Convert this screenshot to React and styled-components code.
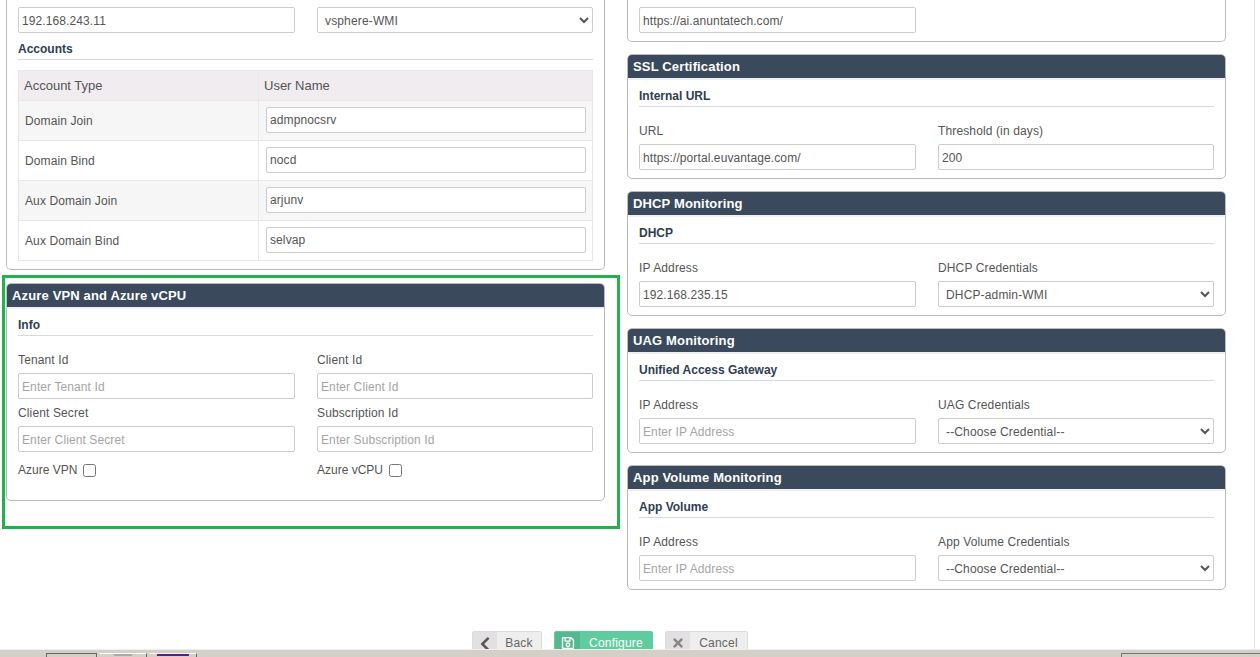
import React from "react";
import styled, { createGlobalStyle } from "styled-components";
import { FaChevronLeft, FaRegSave, FaTimes } from "react-icons/fa";

const GlobalStyle = createGlobalStyle`
  html, body {
    margin: 0;
    padding: 0;
    height: 100%;
    overflow: hidden;
    background: #fff;
    font-family: "Liberation Sans", Arial, sans-serif;
    font-size: 12px;
    color: #555;
  }
`;

const Page = styled.div`
  width: 1260px;
  height: 657px;
  display: flex;
  flex-direction: column;
  overflow: hidden;
`;

const Main = styled.div`
  flex: 1;
  min-height: 0;
  width: 1255px;
  box-sizing: border-box;
  border-right: 1px solid #e4e4e4;
  overflow: hidden;
`;

const Columns = styled.div`
  display: grid;
  grid-template-columns: 599px 599px;
  column-gap: 22px;
  padding-left: 6px;
`;

const Column = styled.div`
  display: flex;
  flex-direction: column;
  gap: ${props => props.$gap}px;
`;

const Panel = styled.section`
  position: relative;
  box-sizing: border-box;
  background: #fff;
  border: 1px solid #bbb;
  border-top: ${props => (props.$cut ? "none" : "1px solid #bbb")};
  border-radius: ${props => (props.$cut ? "0 0 5px 5px" : "5px")};
  height: ${props => props.$height}px;
`;

const PanelTitle = styled.h2`
  margin: 0;
  height: 23px;
  line-height: 23px;
  padding-left: 5px;
  background: #3a4a5c;
  border-bottom: 2px solid #f0f0f0;
  border-radius: 4px 4px 0 0;
  color: #fff;
  font-size: 13px;
  font-weight: 700;
  letter-spacing: 0.15px;
`;

const PanelBody = styled.div`
  padding: ${props => props.$top ?? 8}px 11px 0;
`;

const SectionTitle = styled.h3`
  margin: ${props => props.$before ?? 0}px 0 ${props => props.$after ?? 17}px;
  height: 18px;
  line-height: 16px;
  border-bottom: 1px solid #d3dae0;
  color: #2e3e50;
  font-size: 12px;
  font-weight: 700;
`;

const FieldGrid = styled.div`
  display: grid;
  grid-template-columns: 277px 276px;
  column-gap: 22px;
  row-gap: ${props => props.$rowGap ?? 0}px;
`;

const Field = styled.div`
  display: flex;
  flex-direction: column;
`;

const Label = styled.label`
  height: 20px;
  line-height: 14px;
  color: #555;
  font-size: 12px;
  letter-spacing: 0.13px;
`;

const TextInput = styled.input`
  box-sizing: border-box;
  width: 100%;
  height: 26px;
  padding: 1px 3px 0;
  background: #fff;
  border: 1px solid #ccc;
  border-radius: 2px;
  outline: none;
  color: #555;
  font-family: inherit;
  font-size: 12px;
  letter-spacing: 0.1px;

  &::placeholder {
    color: #a5a5a5;
    opacity: 1;
  }
`;

const SelectInput = styled.select`
  box-sizing: border-box;
  width: 100%;
  height: 26px;
  padding: 1px 3px 0;
  background: #fff;
  border: 1px solid #ccc;
  border-radius: 2px;
  color: #555;
  font-family: inherit;
  font-size: 12px;
  letter-spacing: 0.15px;
`;

const AccountsTable = styled.table`
  width: 575px;
  margin-top: 10px;
  border-collapse: collapse;
  table-layout: fixed;
`;

const HeadCell = styled.th`
  height: 30px;
  padding: 0 5px;
  box-sizing: border-box;
  background: #f0ecf0;
  border: 1px solid #e8e8e8;
  color: #555;
  font-size: 13px;
  font-weight: 400;
  text-align: left;
  width: ${props => props.$width || "auto"};
`;

const BodyCell = styled.td`
  height: 40px;
  padding: 0 6px ${props => props.$bottom ?? 0}px ${props => props.$left}px;
  box-sizing: border-box;
  background: ${props => (props.$odd ? "#f6f6f6" : "#fff")};
  border: 1px solid #e8e8e8;
  color: #555;
  font-size: 12px;
  letter-spacing: 0.1px;
`;

const CheckRow = styled.div`
  display: flex;
  align-items: center;
  gap: 6px;
  height: 14px;
  margin-top: 4px;
`;

const CheckBox = styled.input`
  appearance: none;
  box-sizing: border-box;
  width: 13px;
  height: 13px;
  margin: 0;
  border: 1px solid #767676;
  border-radius: 2.5px;
  background: #fff;
`;

const GreenFrame = styled.div`
  position: absolute;
  top: -9px;
  left: -5px;
  right: -16px;
  bottom: -29px;
  border: 3px solid #22b14c;
  pointer-events: none;
`;

const ButtonBar = styled.div`
  display: flex;
  justify-content: center;
  gap: 12px;
  width: 1220px;
  margin-top: 41px;
`;

const Button = styled.button`
  display: flex;
  align-items: stretch;
  box-sizing: border-box;
  height: 30px;
  width: ${props => props.$width}px;
  padding: 0;
  background: ${props => (props.$primary ? "#5fcca0" : "#eeeeee")};
  border: 1px solid ${props => (props.$primary ? "#5fcca0" : "#dcdcdc")};
  border-radius: 2px;
  color: ${props => (props.$primary ? "#fff" : "#666")};
  font-family: inherit;
  font-size: 12px;
`;

const ButtonIcon = styled.span`
  flex: 0 0 ${props => props.$width}px;
  display: flex;
  justify-content: center;
  padding-top: ${props => props.$top}px;
  box-sizing: border-box;
  background: ${props => (props.$primary ? "#54b98f" : "#e2e0e2")};
`;

const ButtonLabel = styled.span`
  flex: 1;
  text-align: center;
  padding-top: 4px;
  line-height: 14px;
  letter-spacing: 0.2px;
`;

const TaskBar = styled.div`
  flex: 0 0 8px;
  display: flex;
  box-sizing: border-box;
  padding-top: 3px;
  background: #d4d0c8;
  border-top: 1px solid #f0efea;
`;

const TaskSlot = styled.div`
  box-sizing: border-box;
  display: flex;
  justify-content: center;
  flex: 0 0 ${props => props.$width}px;
  margin-left: ${props => props.$left}px;
  border-left: 1px solid ${props => props.$edge || "#d4d0c8"};
  border-right: 1px solid ${props => props.$rightEdge || "#d4d0c8"};
  border-top: 1px solid ${props => props.$top || "#fff"};
`;

const TaskMark = styled.div`
  width: ${props => props.$width}px;
  height: 2px;
  background: ${props => props.$color};
`;

const accounts = [
  ["Domain Join", "admpnocsrv"],
  ["Domain Bind", "nocd"],
  ["Aux Domain Join", "arjunv"],
  ["Aux Domain Bind", "selvap"],
];

const monitors = [
  {
    title: "DHCP Monitoring",
    section: "DHCP",
    label: "IP Address",
    value: "192.168.235.15",
    selectLabel: "DHCP Credentials",
    option: "DHCP-admin-WMI",
  },
  {
    title: "UAG Monitoring",
    section: "Unified Access Gateway",
    label: "IP Address",
    placeholder: "Enter IP Address",
    selectLabel: "UAG Credentials",
    option: "--Choose Credential--",
  },
  {
    title: "App Volume Monitoring",
    section: "App Volume",
    label: "IP Address",
    placeholder: "Enter IP Address",
    selectLabel: "App Volume Credentials",
    option: "--Choose Credential--",
  },
];

const azureFields = [
  ["Tenant Id", "Enter Tenant Id"],
  ["Client Id", "Enter Client Id"],
  ["Client Secret", "Enter Client Secret"],
  ["Subscription Id", "Enter Subscription Id"],
];

const App = () => {
  return (
    <Page>
      <GlobalStyle />
      <Main>
        <Columns>
          <Column $gap={13}>
            <Panel $cut $height={270}>
              <PanelBody $top={7}>
                <FieldGrid>
                  <TextInput defaultValue="192.168.243.11" />
                  <SelectInput defaultValue="vsphere-WMI">
                    <option>vsphere-WMI</option>
                  </SelectInput>
                </FieldGrid>
                <SectionTitle $before={8} $after={0}>
                  Accounts
                </SectionTitle>
                <AccountsTable>
                  <thead>
                    <tr>
                      <HeadCell $width="240px">Account Type</HeadCell>
                      <HeadCell>User Name</HeadCell>
                    </tr>
                  </thead>
                  <tbody>
                    {accounts.map(([type, name], i) => (
                      <tr key={type}>
                        <BodyCell $left={6} $odd={i % 2 === 0}>
                          {type}
                        </BodyCell>
                        <BodyCell $left={7} $bottom={2} $odd={i % 2 === 0}>
                          <TextInput defaultValue={name} />
                        </BodyCell>
                      </tr>
                    ))}
                  </tbody>
                </AccountsTable>
              </PanelBody>
            </Panel>

            <Panel $height={218}>
              <PanelTitle>Azure VPN and Azure vCPU</PanelTitle>
              <PanelBody>
                <SectionTitle>Info</SectionTitle>
                <FieldGrid $rowGap={7}>
                  {azureFields.map(([label, placeholder]) => (
                    <Field key={label}>
                      <Label>{label}</Label>
                      <TextInput placeholder={placeholder} />
                    </Field>
                  ))}
                  <CheckRow>
                    <span>Azure VPN</span>
                    <CheckBox type="checkbox" />
                  </CheckRow>
                  <CheckRow>
                    <span>Azure vCPU</span>
                    <CheckBox type="checkbox" />
                  </CheckRow>
                </FieldGrid>
              </PanelBody>
              <GreenFrame />
            </Panel>
          </Column>

          <Column $gap={12}>
            <Panel $cut $height={42}>
              <PanelBody $top={7}>
                <FieldGrid>
                  <TextInput defaultValue="https://ai.anuntatech.com/" />
                </FieldGrid>
              </PanelBody>
            </Panel>

            <Panel $height={125}>
              <PanelTitle>SSL Certification</PanelTitle>
              <PanelBody>
                <SectionTitle>Internal URL</SectionTitle>
                <FieldGrid>
                  <Field>
                    <Label>URL</Label>
                    <TextInput defaultValue="https://portal.euvantage.com/" />
                  </Field>
                  <Field>
                    <Label>Threshold (in days)</Label>
                    <TextInput defaultValue="200" />
                  </Field>
                </FieldGrid>
              </PanelBody>
            </Panel>

            {monitors.map(item => (
              <Panel key={item.title} $height={125}>
                <PanelTitle>{item.title}</PanelTitle>
                <PanelBody>
                  <SectionTitle>{item.section}</SectionTitle>
                  <FieldGrid>
                    <Field>
                      <Label>{item.label}</Label>
                      <TextInput
                        defaultValue={item.value}
                        placeholder={item.placeholder}
                      />
                    </Field>
                    <Field>
                      <Label>{item.selectLabel}</Label>
                      <SelectInput defaultValue={item.option}>
                        <option>{item.option}</option>
                      </SelectInput>
                    </Field>
                  </FieldGrid>
                </PanelBody>
              </Panel>
            ))}
          </Column>
        </Columns>

        <ButtonBar>
          <Button $width={70}>
            <ButtonIcon $width={24} $top={4}>
              <FaChevronLeft size={16} color="#555" />
            </ButtonIcon>
            <ButtonLabel>Back</ButtonLabel>
          </Button>
          <Button $width={99} $primary>
            <ButtonIcon $width={25} $top={4} $primary>
              <FaRegSave size={14} color="#fff" />
            </ButtonIcon>
            <ButtonLabel>Configure</ButtonLabel>
          </Button>
          <Button $width={83}>
            <ButtonIcon $width={24} $top={4}>
              <FaTimes size={14} color="#888" />
            </ButtonIcon>
            <ButtonLabel>Cancel</ButtonLabel>
          </Button>
        </ButtonBar>
      </Main>
      <TaskBar>
        <TaskSlot $left={46} $width={51} $edge="#666" $rightEdge="#666" $top="#666" />
        <TaskSlot $left={2} $width={48} $rightEdge="#666">
          <TaskMark $width={18} $color="#aaa" />
        </TaskSlot>
        <TaskSlot $left={2} $width={48} $rightEdge="#666">
          <TaskMark $width={32} $color="#5a1e8c" />
        </TaskSlot>
        <TaskSlot $left={924} $width={140} $edge="#777" $top="#777" />
      </TaskBar>
    </Page>
  );
};

export default App;
